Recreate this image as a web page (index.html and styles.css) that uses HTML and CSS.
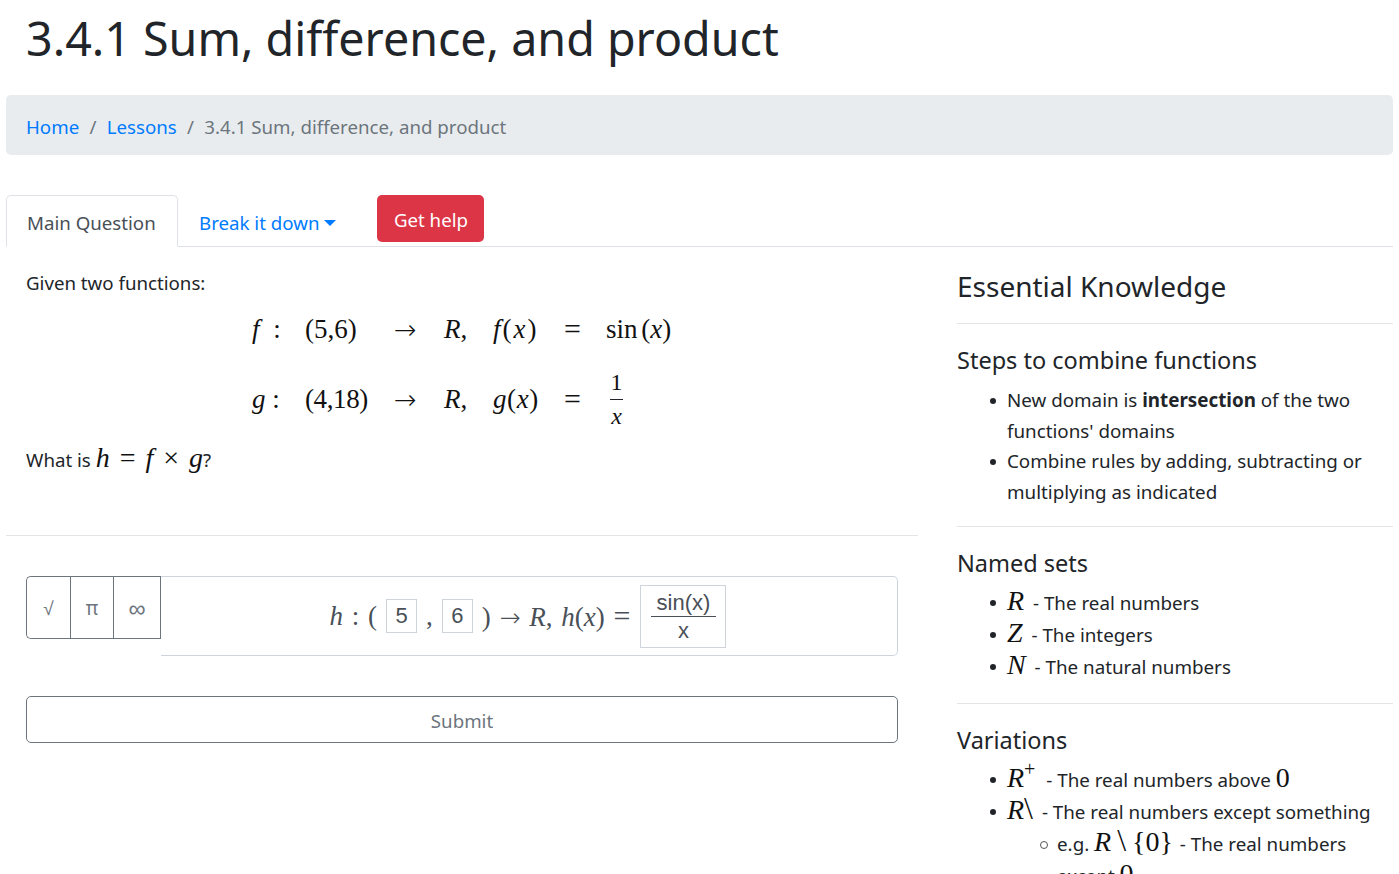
FILE: index.html
```html
<!DOCTYPE html>
<html lang="en">
<head>
    <meta charset="UTF-8">
    <meta name="viewport" content="width=device-width, initial-scale=1.0">
    <title>3.4.1 Sum, difference, and product</title>
    <link rel="stylesheet" href="styles.css">
</head>
<body>
    <h1 class="page-title">3.4.1 Sum, difference, and product</h1>

    <nav class="breadcrumb">
        <a href="#">Home</a>
        <span class="sep">/</span>
        <a href="#">Lessons</a>
        <span class="sep">/</span>
        <span class="current">3.4.1 Sum, difference, and product</span>
    </nav>

    <div class="tabs">
        <a class="tab active" href="#">Main Question</a>
        <a class="tab" href="#">Break it down<span class="caret"></span></a>
        <button class="help-btn" type="button">Get help</button>
    </div>

    <div class="columns">
        <main class="question">
            <div class="question-text">
                <p class="given">Given two functions:</p>
                <div class="math-table">
                    <span class="m"><i class="f-name">f</i> :</span>
                    <span class="m">(5,6)</span>
                    <span class="m arrow">→</span>
                    <span class="m"><i>R</i>,</span>
                    <span class="m func"><i>f</i>(<i>x</i>)</span>
                    <span class="m eq">=</span>
                    <span class="m sin">sin (<i>x</i>)</span>

                    <span class="m"><i>g</i> :</span>
                    <span class="m narrow">(4,18)</span>
                    <span class="m arrow">→</span>
                    <span class="m"><i>R</i>,</span>
                    <span class="m func narrow"><i>g</i>(<i>x</i>)</span>
                    <span class="m eq">=</span>
                    <span class="m frac"><span class="num">1</span><i>x</i></span>
                </div>
                <p class="what">What is <span class="m big spaced"><i>h</i> = <i>f</i> × <i>g</i></span>?</p>
            </div>

            <hr class="question-rule">

            <div class="answer">
                <div class="keypad">
                    <button type="button">√</button>
                    <button type="button">π</button>
                    <button type="button">∞</button>
                </div>
                <div class="answer-box">
                    <span class="m ans-math"><i>h</i> : (</span>
                    <span class="slot">5</span>
                    <span class="m ans-math">,</span>
                    <span class="slot">6</span>
                    <span class="m ans-math">) <span class="arrow">→</span> <i>R</i>, <i>h</i>(<i>x</i>) <span class="eq">=</span></span>
                    <span class="slot slot-frac"><span class="slot-num">sin(x)</span><span>x</span></span>
                </div>
            </div>

            <button class="submit-btn" type="button">Submit</button>
        </main>

        <aside class="sidebar">
            <h3 class="side-title">Essential Knowledge</h3>
            <hr>
            <h4>Steps to combine functions</h4>
            <ul>
                <li>New domain is <b>intersection</b> of the two functions' domains</li>
                <li>Combine rules by adding, subtracting or multiplying as indicated</li>
            </ul>
            <hr>
            <h4>Named sets</h4>
            <ul class="sets">
                <li><span class="m big"><i>R</i></span> - The real numbers</li>
                <li><span class="m big"><i>Z</i></span> - The integers</li>
                <li><span class="m big"><i>N</i></span> - The natural numbers</li>
            </ul>
            <hr>
            <h4>Variations</h4>
            <ul class="sets">
                <li><span class="m big"><i>R</i><sup>+</sup></span> - The real numbers above <span class="m big">0</span></li>
                <li><span class="m big"><i>R</i><span class="bs">\</span></span> - The real numbers except something
                    <ul>
                        <li>e.g. <span class="m big"><i>R</i> <span class="bs">\</span> {0}</span> - The real numbers except <span class="m big">0</span></li>
                    </ul>
                </li>
            </ul>
        </aside>
    </div>
</body>
</html>
```

FILE: styles.css
```css
html, body {
    height: 100%;
    overflow: hidden;
}
body {
    margin: 0;
    padding: 0 6px;
    font-family: "Noto Sans", Arial, sans-serif;
    font-size: 18.7px;
    line-height: 30px;
    color: #212529;
    background-color: #fff;
}
a {
    color: #007bff;
    text-decoration: none;
}
hr {
    border: 0;
    border-top: 1px solid #e3e5e8;
    margin: 0;
}
.m {
    font-family: "Liberation Serif", "Times New Roman", serif;
    font-size: 27px;
    line-height: 1;
    white-space: nowrap;
    color: #111;
}
.m.big {
    font-size: 28px;
    margin-right: 4px;
}
.m.spaced {
    word-spacing: 3px;
    margin-right: 0;
}
.bs {
    font-size: 32px;
    line-height: 0;
}
.f-name {
    margin-right: 7px;
}
.func {
    letter-spacing: 2px;
}
.narrow {
    letter-spacing: -0.4px;
}
.func.narrow {
    letter-spacing: 0.6px;
}
.sin {
    word-spacing: -3px;
}
.eq {
    font-size: 30px;
}
.arrow {
    font-family: "DejaVu Sans", sans-serif;
    font-size: 27px;
    font-weight: 200;
}

.page-title {
    margin: 0;
    padding: 8px 20px 0;
    height: 95px;
    box-sizing: border-box;
    font-size: 46.6px;
    line-height: 60px;
    font-weight: 400;
}
.breadcrumb {
    display: flex;
    align-items: center;
    height: 60px;
    padding: 4px 20px 0;
    box-sizing: border-box;
    background-color: #e9ecef;
    border-radius: 5px;
}
.breadcrumb .sep {
    margin: 0 10.3px;
    color: #6c757d;
}
.breadcrumb .current {
    color: #6c757d;
}

.tabs {
    display: flex;
    align-items: flex-start;
    margin-top: 40px;
    height: 51px;
    border-bottom: 1px solid #dee2e6;
}
.tab {
    height: 52px;
    box-sizing: border-box;
    padding: 12px 20px 0;
    border: 1px solid transparent;
    border-radius: 5px 5px 0 0;
}
.tab.active {
    width: 172px;
    color: #495057;
    background-color: #fff;
    border-color: #dee2e6 #dee2e6 #fff;
}
.caret {
    display: inline-block;
    margin-left: 5px;
    vertical-align: 4px;
    border-top: 6px solid #007bff;
    border-left: 6px solid transparent;
    border-right: 6px solid transparent;
}
.help-btn {
    width: 107px;
    height: 47px;
    margin-left: 20px;
    padding: 2px 0 0;
    color: #fff;
    background-color: #dc3545;
    border: 0;
    border-radius: 5px;
    font: inherit;
}

.columns {
    display: flex;
}
.question {
    width: 912px;
    flex: none;
}
.question-text {
    height: 288px;
    padding: 21px 20px 0;
    box-sizing: border-box;
}
.question-text p {
    margin: 0;
}
.math-table {
    display: grid;
    grid-template-columns: 53px 89px 50px 49px 71px 42px auto;
    grid-template-rows: 62px 78px;
    align-items: center;
    margin: 0 0 0 226px;
    height: 140px;
}
.frac {
    display: inline-flex;
    flex-direction: column;
    align-items: center;
    justify-self: start;
    margin-left: 4px;
    font-size: 24px;
    line-height: 33px;
}
.frac .num {
    border-bottom: 1px solid #212529;
    width: 13px;
    text-align: center;
}
.question-text .what {
    line-height: 40px;
    margin-top: 2px;
}

.answer {
    display: flex;
    align-items: flex-start;
    margin: 40px 20px 0;
}
.keypad {
    display: flex;
    height: 63px;
    flex: none;
    box-sizing: border-box;
    border: 1px solid #6c757d;
    border-right: 0;
    border-radius: 5px 0 0 5px;
}
.keypad button {
    width: 43px;
    padding: 0;
    color: #6c757d;
    background: #fff;
    border: 0;
    border-right: 1px solid #6c757d;
    font: inherit;
    font-size: 19px;
}
.keypad button:first-child {
    width: 44px;
    border-radius: 5px 0 0 5px;
}
.keypad button:last-child {
    width: 47px;
    font-size: 24px;
}
.answer-box {
    flex: 1;
    display: flex;
    justify-content: center;
    align-items: center;
    gap: 9px;
    height: 80px;
    padding-right: 2px;
    box-sizing: border-box;
    border: 1px solid #ced4da;
    border-left: 0;
    border-radius: 0 5px 5px 0;
    font-family: "Liberation Sans", Arial, sans-serif;
    font-size: 22px;
    color: #495057;
}
.m.ans-math {
    word-spacing: 2px;
    color: #495057;
}
.ans-math .arrow {
    font-size: 25px;
}
.slot {
    min-width: 31px;
    height: 34px;
    box-sizing: border-box;
    line-height: 32px;
    text-align: center;
    border: 1px solid #ced4da;
}
.slot-frac {
    display: flex;
    flex-direction: column;
    align-items: center;
    justify-content: center;
    width: 86px;
    height: 63px;
    line-height: 27px;
    margin-left: 1px;
}
.slot-num {
    width: 65px;
    border-bottom: 1px solid #495057;
}
.submit-btn {
    display: block;
    width: 872px;
    height: 47px;
    margin: 40px 20px 0;
    padding: 2px 0 0;
    color: #6c757d;
    background: #fff;
    border: 1px solid #6c757d;
    border-radius: 5px;
    font: inherit;
}

.sidebar {
    flex: 1;
    margin-left: 39px;
    padding-top: 20px;
    font-size: 18.8px;
}
.side-title {
    margin: 0;
    height: 56px;
    font-size: 28px;
    line-height: 38px;
    font-weight: 400;
}
.sidebar h4 {
    margin: 20px 0 0;
    font-size: 23.5px;
    line-height: 33px;
    font-weight: 400;
}
.sidebar ul {
    margin: 8px 0 18px;
    padding-left: 50px;
    list-style: none;
}
.sidebar ul ul {
    margin: 0;
}
.sidebar ul ul .m.big {
    margin-right: 2px;
    word-spacing: -1px;
}
.sidebar li {
    position: relative;
    line-height: 30.7px;
}
.sidebar li::before {
    content: "";
    position: absolute;
    left: -17px;
    top: 13px;
    width: 6px;
    height: 6px;
    border-radius: 50%;
    background-color: #212529;
}
.sidebar li li::before {
    width: 6px;
    height: 6px;
    background-color: #fff;
    border: 1px solid #555;
}
.sidebar .sets {
    margin-top: 7px;
    margin-bottom: 20px;
}
.sidebar .sets ul {
    margin: 0;
}
.sidebar .sets li {
    line-height: 32px;
}
.sidebar sup {
    font-size: 20px;
    line-height: 0;
    margin-right: 2px;
}
```
